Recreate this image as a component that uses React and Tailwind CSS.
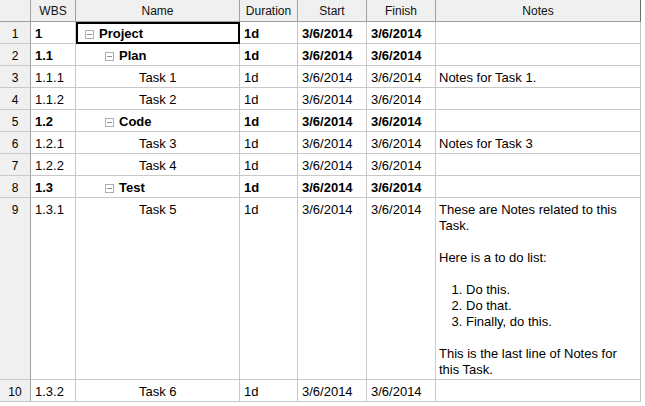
import React from "react";

const rows = [
  { n: 1, wbs: "1", name: "Project", level: 0, summary: true },
  { n: 2, wbs: "1.1", name: "Plan", level: 1, summary: true },
  { n: 3, wbs: "1.1.1", name: "Task 1", level: 2, notes: "Notes for Task 1." },
  { n: 4, wbs: "1.1.2", name: "Task 2", level: 2 },
  { n: 5, wbs: "1.2", name: "Code", level: 1, summary: true },
  { n: 6, wbs: "1.2.1", name: "Task 3", level: 2, notes: "Notes for Task 3" },
  { n: 7, wbs: "1.2.2", name: "Task 4", level: 2 },
  { n: 8, wbs: "1.3", name: "Test", level: 1, summary: true },
  { n: 9, wbs: "1.3.1", name: "Task 5", level: 2, long: true },
  { n: 10, wbs: "1.3.2", name: "Task 6", level: 2 },
];

const cols = "grid grid-cols-[31px_45px_164px_58px_69px_69px_205px]";
const head =
  "h-[22px] bg-[#f0f0f0] border-r border-b border-[#a0a0a0] flex items-center justify-center text-[12px] text-[#111]";
const cell = "border-r border-b border-[#c8c8c8] pt-[4px] pl-[4px] leading-[16px] text-[13px] whitespace-nowrap";

function Expander() {
  return (
    <span className="w-[9px] h-[9px] border border-[#b0b0b0] bg-white flex items-center justify-center mr-[5px] shrink-0">
      <span className="w-[5px] h-px bg-[#909090]" />
    </span>
  );
}

function LongNotes() {
  return (
    <div className="whitespace-normal pr-[4px]">
      <div>These are Notes related to this Task.</div>
      <div className="h-[16px]" />
      <div>Here is a to do list:</div>
      <div className="h-[16px]" />
      <ol className="list-decimal pl-[27px]">
        <li>Do this.</li>
        <li>Do that.</li>
        <li>Finally, do this.</li>
      </ol>
      <div className="h-[16px]" />
      <div>This is the last line of Notes for this Task.</div>
    </div>
  );
}

export default function App() {
  return (
    <div className="w-[645px] h-[406px] bg-white text-black font-['Liberation_Sans',Arial,sans-serif]">
      <div className="w-[641px]">
        {/* Header */}
        <div className={cols}>
          <div className={head}></div>
          <div className={head}>WBS</div>
          <div className={head}>Name</div>
          <div className={head}>Duration</div>
          <div className={head}>Start</div>
          <div className={head}>Finish</div>
          <div className={head + " border-r-[#6b6b6b]"}>Notes</div>
        </div>

        {/* Rows */}
        {rows.map((r) => {
          const h = r.long ? "h-[182px]" : "h-[22px]";
          const b = r.summary ? " font-bold" : "";
          return (
            <div key={r.n} className={cols}>
              <div className={`${h} bg-[#f0f0f0] border-r border-b border-r-[#a0a0a0] border-b-[#c8c8c8] pt-[4px] leading-[16px] text-[12px] text-center`}>
                {r.n}
              </div>
              <div className={`${h} ${cell}${b}`}>{r.wbs}</div>
              <div className={`${h} ${cell}${b} relative !pl-0`}>
                <div
                  className={
                    "flex items-center " +
                    (r.level === 0 ? "pl-[9px]" : r.level === 1 ? "pl-[29px]" : "pl-[63px]")
                  }
                >
                  {r.summary && <Expander />}
                  <span>{r.name}</span>
                </div>
                {r.n === 1 && (
                  <div className="absolute left-0 top-0 right-[-1px] bottom-[-1px] border-2 border-black" />
                )}
              </div>
              <div className={`${h} ${cell}${b}`}>1d</div>
              <div className={`${h} ${cell}${b}`}>3/6/2014</div>
              <div className={`${h} ${cell}${b}`}>3/6/2014</div>
              <div className={`${h} ${cell} !pl-[3px]`}>
                {r.long ? <LongNotes /> : r.notes}
              </div>
            </div>
          );
        })}
      </div>
    </div>
  );
}
